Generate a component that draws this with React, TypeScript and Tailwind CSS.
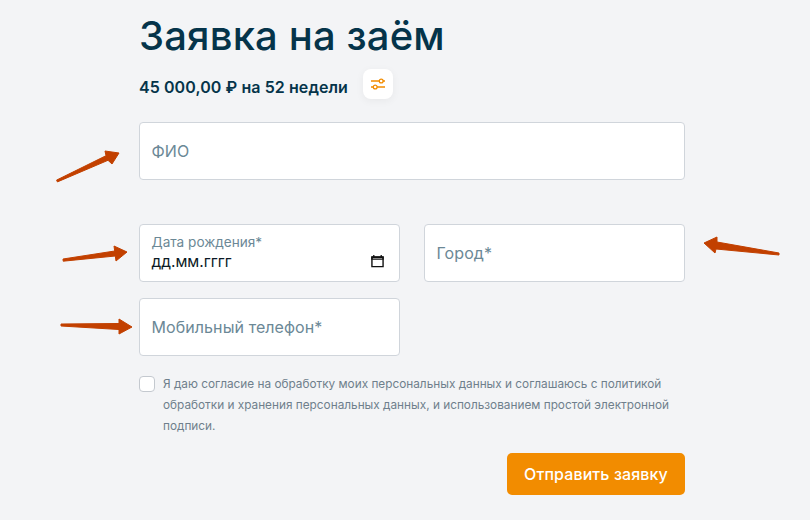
const inputClass =
  "h-[58px] w-full rounded-[4px] border border-[#d0d5db] bg-white px-[11.5px] text-[16px] tracking-[0.08px] text-[#0a3a4f] outline-none placeholder:text-[#6b8896]";

function Arrows() {
  // hand drawn annotation arrows on top of the form
  return (
    <svg className="pointer-events-none absolute left-0 top-0" width="810" height="520" viewBox="0 0 810 520">
      <g fill="#c24000" stroke="#c24000" strokeWidth="1" strokeLinejoin="round">
        <polygon points="56.6,180.1 106,155.7 105,151 119,153 112,164 108,160.3 57.4,181.9" />
        <polygon points="63,259 114.7,251 114,246 127,252 116,261 115.3,256 63.2,261.2" />
        <polygon points="61,324 119,323.5 119,319 132,327 119,334 119,329.5 61,326" />
        <polygon points="704,243 717,237 717,242 779,253 779,255 716,249 715,253" />
      </g>
    </svg>
  );
}

export default function App() {
  return (
    <div className="relative h-[520px] w-[810px] overflow-hidden bg-[#f3f4f6] font-['Inter',sans-serif]">
      <div className="ml-[139px] w-[546px]">
        <h1 className="mt-[12px] text-[40px] leading-[48px] font-medium tracking-[0.15px] text-[#05344a]">Заявка на заём</h1>

        <div className="mt-[9px] flex h-[30px] items-center gap-[15px]">
          <span className="mt-[6px] text-[16px] font-semibold tracking-[0.08px] text-[#05344a]">45 000,00 ₽ на 52 недели</span>
          <button className="flex h-[30px] w-[30px] items-center justify-center rounded-[8px] bg-white shadow-[0_2px_8px_rgba(0,0,0,0.05)]">
            <svg width="16" height="14" viewBox="0 0 16 14" fill="none" stroke="#f28c00" strokeWidth="1.3">
              <path d="M1 4h8.5M13 4h2M1 10h2.5M7 10h8" />
              <circle cx="11.2" cy="4" r="1.9" />
              <circle cx="5.2" cy="10" r="1.9" />
            </svg>
          </button>
        </div>

        <input className={`${inputClass} mt-[23px]`} placeholder="ФИО" />

        <div className="mt-[44px] grid grid-cols-[261px_261px] gap-x-[24px] gap-y-[16px]">
          <div className="relative flex h-[58px] flex-col rounded-[4px] border border-[#d0d5db] bg-white px-[11.5px] pt-[8px]">
            <span className="text-[13.6px] leading-[18px] text-[#6b8896]">Дата рождения*</span>
            <span className="mt-[1px] text-[15.5px] leading-[19px] font-normal text-[#0b1a24]">дд.мм.гггг</span>
            <svg className="absolute right-[15px] top-[29px]" width="13" height="14" viewBox="0 0 14 15" fill="none">
              <path d="M1 3.5h12v10H1z" stroke="#111" strokeWidth="1.5" />
              <path d="M1 3h12v2.5H1zM3 1v2M11 1v2" stroke="#111" strokeWidth="1.4" />
            </svg>
          </div>
          <input className={inputClass} placeholder="Город*" />
          <input className={inputClass} placeholder="Мобильный телефон*" />
        </div>

        <div className="mt-[17px] flex gap-[8px]">
          <input
            type="checkbox"
            className="mt-[3px] h-[16px] w-[16px] shrink-0 appearance-none rounded-[4px] border border-[#c4c9cf] bg-white"
          />
          <p className="pt-[1px] text-[11.8px] leading-[21px] text-[#6f7f8c]">
            Я даю согласие на обработку моих персональных данных и соглашаюсь с политикой обработки и хранения персональных данных, и использованием простой электронной подписи.
          </p>
        </div>

        <div className="mt-[16px] flex justify-end">
          <button className="h-[42px] w-[178px] rounded-[5px] bg-[#f28c00] text-[16px] font-medium tracking-[0.1px] text-white">
            Отправить заявку
          </button>
        </div>
      </div>
      <Arrows />
    </div>
  );
}
